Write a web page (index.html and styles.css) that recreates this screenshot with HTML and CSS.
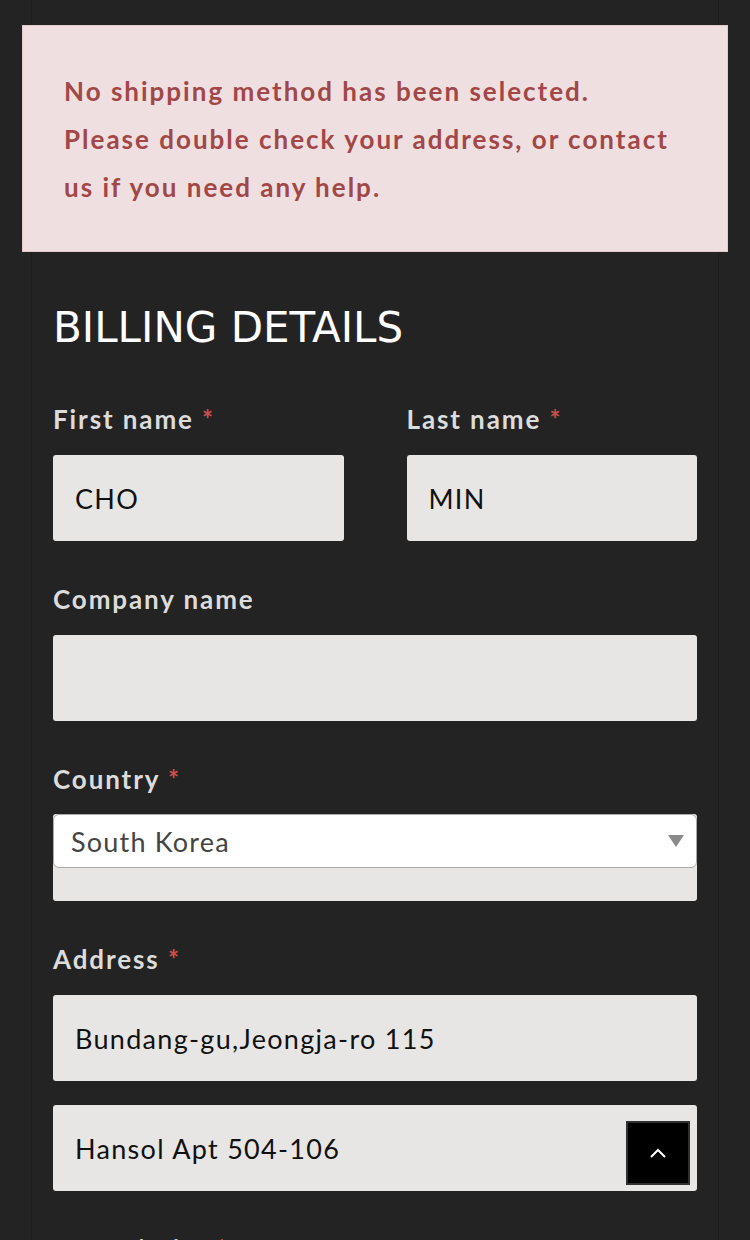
FILE: index.html
```html
<!DOCTYPE html>
<html lang="en">
<head>
    <meta charset="UTF-8">
    <meta name="viewport" content="width=device-width, initial-scale=1.0">
    <title>Checkout</title>
    <link rel="stylesheet" href="styles.css">
</head>
<body>
    <div id="checkout">
        <div class="notice">
            No shipping method has been selected.<br>
            Please double check your address, or contact us if you need any help.
        </div>

        <form id="billing-form">
            <h3>BILLING DETAILS</h3>

            <div class="row">
                <div class="field">
                    <label for="first-name">First name <abbr>*</abbr></label>
                    <input type="text" id="first-name" value="CHO">
                </div>
                <div class="field">
                    <label for="last-name">Last name <abbr>*</abbr></label>
                    <input type="text" id="last-name" value="MIN">
                </div>
            </div>

            <div class="field">
                <label for="company">Company name</label>
                <input type="text" id="company">
            </div>

            <div class="field">
                <label>Country <abbr>*</abbr></label>
                <div class="select-wrap">
                    <div class="select">
                        <span>South Korea</span>
                        <svg width="16" height="12" viewBox="0 0 16 12"><path d="M0 0h16L8 12z" fill="#8a8a8a"/></svg>
                    </div>
                </div>
            </div>

            <div class="field">
                <label for="address-1">Address <abbr>*</abbr></label>
                <input type="text" id="address-1" value="Bundang-gu,Jeongja-ro 115">
                <input type="text" id="address-2" class="second" value="Hansol Apt 504-106">
            </div>

            <div class="field">
                <label for="city">Town / City <abbr>*</abbr></label>
                <input type="text" id="city">
            </div>
        </form>
    </div>

    <a href="#" id="to-top">
        <svg width="18" height="12" viewBox="0 0 18 12"><path d="M2 10L9 3l7 7" fill="none" stroke="#fff" stroke-width="2"/></svg>
    </a>
</body>
</html>
```

FILE: styles.css
```css
*{
    margin:0;
    padding:0;
    box-sizing:border-box;
}

body{
    background-color:#232323;
    font-family:Lato, "Noto Sans", sans-serif;
}

#checkout{
    margin:0 31px;
    border-left:1px solid #1b1c20;
    border-right:1px solid #1b1c20;
    padding-top:25px;
    min-height:1300px;
}

.notice{
    margin:0 -10px;
    background-color:#f0dfe0;
    border:1px solid #e4c9cd;
    padding:41px 40px 40px 41px;
    color:#a14747;
    font-size:26px;
    font-weight:bold;
    line-height:48px;
    letter-spacing:2px;
}

#billing-form{
    padding:0 21px;
}

#billing-form h3{
    font-family:"DejaVu Sans", Verdana, sans-serif;
    font-weight:normal;
    color:#fff;
    font-size:42px;
    line-height:50px;
    margin:51px 0 46px;
}

.row{
    display:flex;
    gap:63px;
}
.row .field{
    flex:1;
}

.field{
    margin-bottom:38px;
}

.field label{
    display:block;
    color:#dcdcdc;
    font-size:26px;
    font-weight:bold;
    line-height:40px;
    margin-bottom:16px;
    letter-spacing:1.9px;
}

.field abbr{
    color:#c9504c;
    text-decoration:none;
}

.field input{
    display:block;
    width:100%;
    height:86px;
    border:none;
    border-radius:3px;
    background-color:#e7e6e4;
    padding:0 22px;
    font-family:Lato, "Noto Sans", sans-serif;
    font-size:27px;
    letter-spacing:1.3px;
    color:#111;
    outline:none;
}

.field input.second{
    margin-top:24px;
}

.select-wrap{
    height:87px;
    margin-top:-1px;
    background-color:#e7e6e4;
    border-radius:3px;
}

.select{
    display:flex;
    justify-content:space-between;
    align-items:center;
    height:54px;
    background-color:#fff;
    border:1px solid #a9a9a9;
    border-radius:6px;
    padding:0 12px 0 17px;
    font-size:27px;
    letter-spacing:1.2px;
    color:#444;
}

#to-top{
    position:fixed;
    right:60px;
    bottom:55px;
    width:64px;
    height:64px;
    background-color:#000;
    border:2px solid #303030;
    display:flex;
    justify-content:center;
    align-items:center;
}
```
